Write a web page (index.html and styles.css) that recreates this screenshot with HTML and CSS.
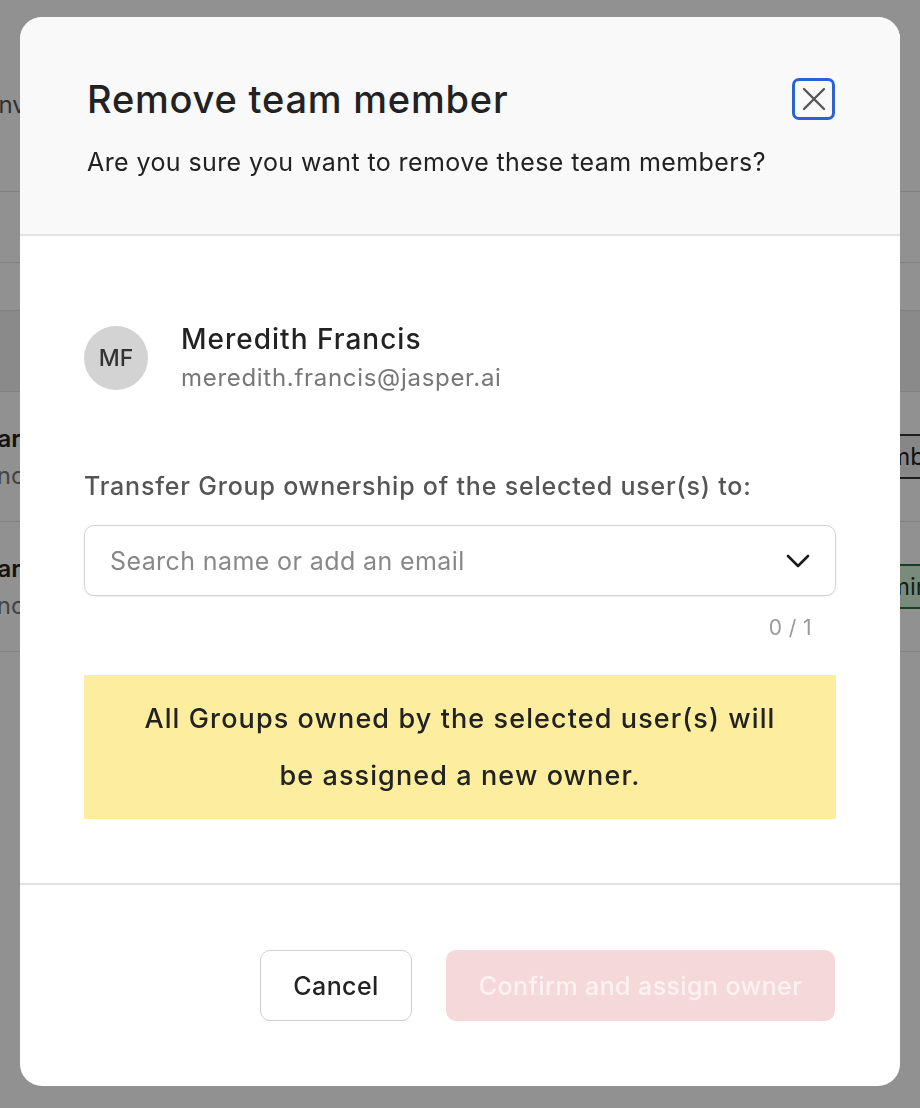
FILE: index.html
```html
<!DOCTYPE html>
<html lang="en">
<head>
<meta charset="utf-8">
<title>Remove team member</title>
<link rel="stylesheet" href="styles.css">
</head>
<body>
<div class="page">
  <div class="top-area"><span class="invite">Invite</span></div>
  <div class="trow short"></div>
  <div class="trow thin"></div>
  <div class="thead"></div>
  <div class="member-row">
    <div class="who"><div class="nm">Sam Taylor Bear</div><div class="em">sam@jasper.ainc</div></div>
    <span class="badge badge-member">Member</span>
  </div>
  <div class="member-row">
    <div class="who"><div class="nm">Sam Taylor Bear</div><div class="em">sam@jasper.ainc</div></div>
    <span class="badge badge-admin">Admin</span>
  </div>
</div>

<div class="overlay">
  <div class="modal" role="dialog" aria-labelledby="dlg-title">
    <div class="modal-head">
      <div class="head-row">
        <h1 id="dlg-title" class="title">Remove team member</h1>
        <button class="close" aria-label="Close">
          <svg width="26" height="26" viewBox="0 0 26 26"><path d="M3 3 L23 23 M23 3 L3 23" stroke="#555" stroke-width="2.4" stroke-linecap="round" fill="none"/></svg>
        </button>
      </div>
      <p class="subtitle">Are you sure you want to remove these team members?</p>
    </div>

    <div class="modal-body">
      <div class="user">
        <div class="avatar">MF</div>
        <div class="user-info">
          <div class="user-name">Meredith Francis</div>
          <div class="user-email">meredith.francis@jasper.ai</div>
        </div>
      </div>

      <div class="label">Transfer Group ownership of the selected user(s) to:</div>
      <div class="select">
        <span class="placeholder">Search name or add an email</span>
        <svg class="chev" width="24" height="14" viewBox="0 0 24 14"><path d="M2 2 L12 12 L22 2" stroke="#1a1a1a" stroke-width="2.6" stroke-linecap="round" stroke-linejoin="round" fill="none"/></svg>
      </div>
      <div class="counter">0 / 1</div>

      <div class="notice">All Groups owned by the selected user(s) will<br>be assigned a new owner.</div>
    </div>

    <div class="modal-foot">
      <button class="btn btn-cancel">Cancel</button>
      <button class="btn btn-confirm" disabled>Confirm and assign owner</button>
    </div>
  </div>
</div>
</body>
</html>
```
FILE: styles.css
```css
* { box-sizing: border-box; }

html, body {
  margin: 0;
  padding: 0;
}

body {
  width: 920px;
  height: 1108px;
  overflow: hidden;
  background: #ffffff;
  font-family: Inter, "Noto Sans", "Liberation Sans", sans-serif;
  color: #222;
}

/* background page (dimmed) */
.page {
  display: flex;
  flex-direction: column;
}
.top-area {
  height: 192px;
  border-bottom: 1px solid #e2e2e2;
  display: flex;
  align-items: center;
  padding-top: 18px;
}
.invite {
  margin-left: -8px;
  font-size: 24px;
  color: #555;
}
.trow.short {
  height: 71px;
  border-bottom: 1px solid #e2e2e2;
}
.trow.thin {
  height: 48px;
  border-bottom: 1px solid #e2e2e2;
}
.thead {
  height: 81px;
  background: #f3f3f3;
  border-bottom: 1px solid #e2e2e2;
}
.member-row {
  height: 130px;
  border-bottom: 1px solid #e2e2e2;
  display: flex;
  align-items: center;
  justify-content: space-between;
}
.who {
  margin-left: -168px;
  display: flex;
  flex-direction: column;
  gap: 8px;
}
.nm { font-size: 24px; font-weight: 600; color: #222; }
.em { font-size: 24px; color: #777; }
.badge {
  font-size: 24px;
  padding: 6px 14px;
  border-radius: 4px;
}
.badge-member {
  margin-right: -44px;
  background: #eeeeee;
  border: 2px solid #333;
  color: #222;
}
.badge-admin {
  margin-right: -26px;
  background: #d6f5dc;
  border: 2px solid #2f6e3c;
  color: #1d3d24;
}

/* overlay + modal */
.overlay {
  position: fixed;
  inset: 0;
  background: rgba(0, 0, 0, 0.43);
  display: flex;
  justify-content: center;
  align-items: flex-start;
  padding-top: 17px;
}

.modal {
  width: 880px;
  height: 1069px;
  background: #fff;
  border-radius: 22px;
  overflow: hidden;
  display: flex;
  flex-direction: column;
}

.modal-head {
  background: #f9f9f9;
  border-bottom: 2px solid #e2e2e2;
  height: 219px;
  padding: 59px 65px 0 67px;
}
.head-row {
  display: flex;
  align-items: center;
  justify-content: space-between;
}
.title {
  margin: 0;
  font-size: 38px;
  font-weight: 500;
  line-height: 46px;
  color: #222;
  letter-spacing: 0.8px;
}
.close {
  width: 43px;
  height: 42px;
  border: 3px solid #2c62cf;
  border-radius: 7px;
  background: #f9f9f9;
  padding: 0;
  display: flex;
  align-items: center;
  justify-content: center;
}
.subtitle {
  margin: 24px 0 0;
  font-size: 25px;
  line-height: 32px;
  letter-spacing: 0.4px;
  color: #222;
}

.modal-body {
  flex: 0 0 auto;
  height: 649px;
  border-bottom: 2px solid #e2e2e2;
  padding: 86px 64px 0 64px;
  display: flex;
  flex-direction: column;
}
.user {
  display: flex;
  align-items: center;
  gap: 33px;
}
.avatar {
  width: 64px;
  height: 64px;
  border-radius: 50%;
  background: #d3d3d3;
  display: flex;
  align-items: center;
  justify-content: center;
  font-size: 23px;
  font-weight: 500;
  color: #333;
}
.user-info {
  display: flex;
  flex-direction: column;
  gap: 7px;
}
.user-name {
  font-size: 28px;
  font-weight: 500;
  line-height: 34px;
  letter-spacing: 1px;
  color: #222;
}
.user-email {
  font-size: 24px;
  line-height: 30px;
  letter-spacing: 0.7px;
  color: #777;
}

.label {
  margin-top: 77px;
  font-size: 25px;
  font-weight: 500;
  line-height: 32px;
  letter-spacing: 0.8px;
  color: #555;
}
.select {
  margin-top: 23px;
  height: 71px;
  border: 1px solid #d2d2d2;
  border-radius: 10px;
  box-shadow: 0 1px 2px rgba(0, 0, 0, 0.08);
  display: flex;
  align-items: center;
  justify-content: space-between;
  padding: 0 25px 0 25px;
}
.placeholder {
  font-size: 25px;
  letter-spacing: 0.4px;
  color: #888;
}
.counter {
  margin-top: 18px;
  align-self: flex-end;
  margin-right: 24px;
  font-size: 21px;
  line-height: 28px;
  letter-spacing: 0.4px;
  color: #999;
}
.notice {
  margin-top: 33px;
  height: 144px;
  background: #fcee9e;
  display: flex;
  align-items: center;
  justify-content: center;
  text-align: center;
  font-size: 27px;
  font-weight: 500;
  line-height: 57px;
  letter-spacing: 1.1px;
  color: #222;
}

.modal-foot {
  flex: 1;
  display: flex;
  justify-content: flex-end;
  align-items: flex-start;
  gap: 34px;
  padding: 65px 65px 0 0;
}
.btn {
  height: 71px;
  border-radius: 10px;
  font-family: inherit;
  font-size: 25px;
  font-weight: 500;
  letter-spacing: 0.4px;
  padding: 0;
}
.btn-cancel {
  width: 152px;
  background: #fff;
  border: 1px solid #cfcfcf;
  color: #222;
}
.btn-confirm {
  width: 389px;
  background: #f5d8d9;
  border: none;
  color: #fdf1f1;
}
```
